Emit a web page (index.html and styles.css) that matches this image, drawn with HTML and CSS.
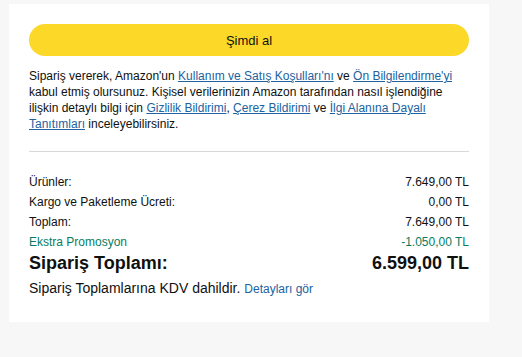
FILE: index.html
```html
<!DOCTYPE html>
<html lang="tr">
<head>
    <meta charset="UTF-8">
    <title>Sipariş Özeti</title>
    <link rel="stylesheet" href="styles.css">
</head>
<body>

<div class="order-box">
    <button class="buy-button" type="button">Şimdi al</button>

    <p class="legal-text">
        Sipariş vererek, Amazon'un <a href="#">Kullanım ve Satış Koşulları'nı</a> ve <a href="#">Ön Bilgilendirme'yi</a>
        kabul etmiş olursunuz. Kişisel verilerinizin Amazon tarafından nasıl işlendiğine
        ilişkin detaylı bilgi için <a href="#">Gizlilik Bildirimi</a>, <a href="#">Çerez Bildirimi</a> ve <a href="#">İlgi Alanına Dayalı Tanıtımları</a> inceleyebilirsiniz.
    </p>

    <hr class="divider">

    <ul class="summary-list">
        <li class="summary-row"><span>Ürünler:</span><span>7.649,00 TL</span></li>
        <li class="summary-row"><span>Kargo ve Paketleme Ücreti:</span><span>0,00 TL</span></li>
        <li class="summary-row"><span>Toplam:</span><span>7.649,00 TL</span></li>
        <li class="summary-row promo"><span>Ekstra Promosyon</span><span>-1.050,00 TL</span></li>
        <li class="summary-row grand-total"><span>Sipariş Toplamı:</span><span>6.599,00 TL</span></li>
    </ul>

    <p class="tax-note">Sipariş Toplamlarına KDV dahildir. <a href="#">Detayları gör</a></p>
</div>

</body>
</html>
```

FILE: styles.css
```css
body {
    background-color: #f7f7f7;
    font-family: "Liberation Sans", Arial, sans-serif;
    color: #0f1111;
    margin: 0;
    padding: 4px 0 0 9px;
}

.order-box {
    width: 440px;
    padding: 20px 20px 23px;
    background-color: #fff;
}

.buy-button {
    display: block;
    width: 100%;
    height: 32px;
    border: none;
    border-radius: 16px;
    background-color: #fcd829;
    color: #0f1111;
    font-family: inherit;
    font-size: 13px;
    cursor: pointer;
}

.legal-text {
    margin: 12px 0 0;
    font-size: 12px;
    line-height: 16px;
}

.legal-text a,
.tax-note a {
    color: #2162a1;
}

.tax-note a {
    text-decoration: none;
    font-size: 12px;
}

.divider {
    border: none;
    border-top: 1px solid #d5d9d9;
    margin: 19px 0 20px;
}

.summary-list {
    list-style: none;
    margin: 0;
    padding: 0;
}

.summary-row {
    display: flex;
    justify-content: space-between;
    font-size: 12px;
    line-height: 20px;
}

.promo {
    color: #067d62;
}

.grand-total {
    font-size: 18px;
    font-weight: bold;
    line-height: 22px;
}

.tax-note {
    margin: 4px 0 0;
    font-size: 14px;
    line-height: 20px;
}
```
